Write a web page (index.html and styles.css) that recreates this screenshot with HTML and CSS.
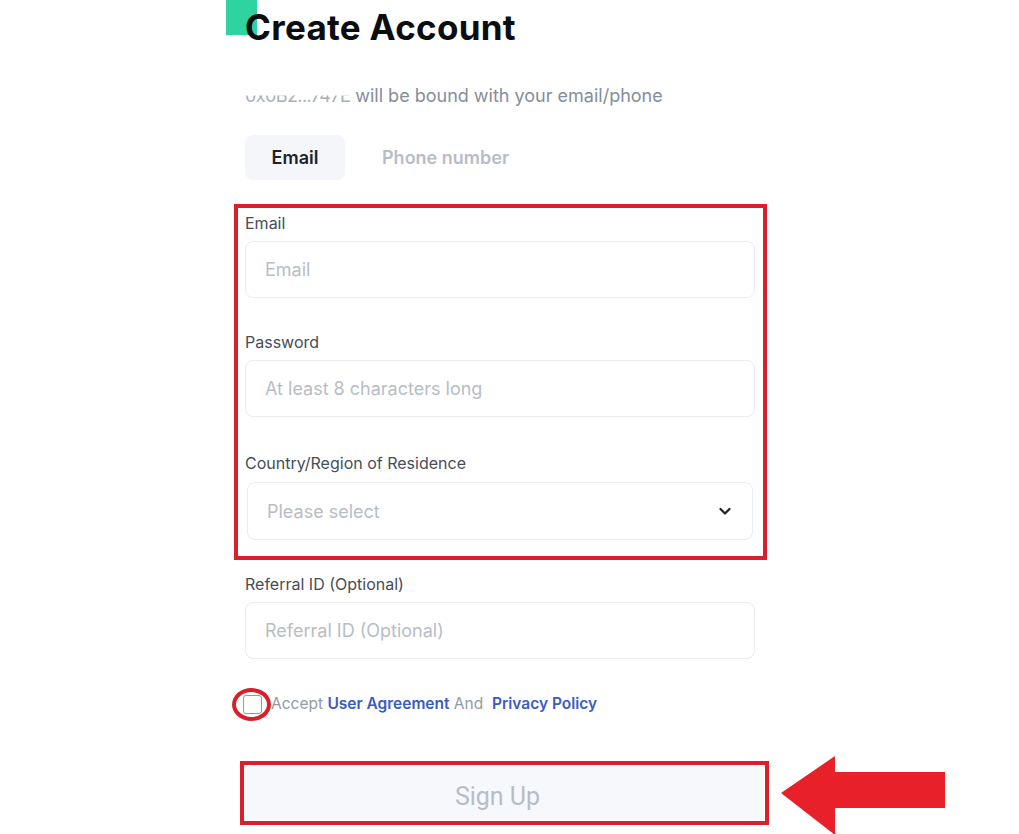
FILE: index.html
```html
<!DOCTYPE html>
<html lang="en">
<head>
    <meta charset="UTF-8">
    <meta name="viewport" content="width=device-width, initial-scale=1.0">
    <title>Create Account</title>
    <link rel="stylesheet" href="styles.css">
</head>
<body>
    <div class="page">
        <div class="logo-block"></div>
        <h1 class="title">Create Account</h1>
        <p class="subtitle"><span class="address">0x0B2...747E</span> will be bound with your email/phone</p>

        <div class="tabs">
            <div class="tab active">Email</div>
            <div class="tab">Phone number</div>
        </div>

        <!-- campos marcados en rojo -->
        <div class="highlight">
            <div class="field first">
                <label class="label">Email</label>
                <div class="input">Email</div>
            </div>
            <div class="field">
                <label class="label">Password</label>
                <div class="input">At least 8 characters long</div>
            </div>
            <div class="field country">
                <label class="label">Country/Region of Residence</label>
                <div class="input select">
                    <span>Please select</span>
                    <svg width="14" height="14" viewBox="0 0 14 14"><path d="M2.5 5 L7 9.5 L11.5 5" fill="none" stroke="#1e2329" stroke-width="2.2" stroke-linecap="round" stroke-linejoin="round"/></svg>
                </div>
            </div>
        </div>

        <div class="field referral">
            <label class="label">Referral ID (Optional)</label>
            <div class="input">Referral ID (Optional)</div>
        </div>

        <div class="agree">
            <span class="checkbox"></span>
            <span class="ring"></span>
            <span>Accept <a href="#">User Agreement</a> And &nbsp;<a href="#">Privacy Policy</a></span>
        </div>

        <div class="signup-box">
            <button class="signup">Sign Up</button>
        </div>

        <svg class="arrow" width="166" height="80" viewBox="0 0 166 80">
            <path d="M0 37 L54 0 L54 16 L164 16 L164 52 L54 52 L54 79 Z" fill="#e8202a"/>
        </svg>
    </div>
</body>
</html>
```

FILE: styles.css
```css
body {
    margin: 0;
    background: #ffffff;
    font-family: Inter, "Noto Sans", sans-serif;
    color: #1e2329;
}
.page {
    position: relative;
    width: 510px;
    margin-left: 245px;
    height: 834px;
}
.logo-block {
    position: absolute;
    left: -19px;
    top: 0;
    width: 31px;
    height: 35px;
    background: #2ed3a0;
}
.title {
    position: relative;
    margin: 0;
    padding-top: 6px;
    font-size: 35px;
    line-height: 42px;
    font-weight: 700;
    color: #0b0e11;
    letter-spacing: 0.3px;
}
.subtitle {
    margin: 37px 0 0;
    font-size: 18px;
    line-height: 22px;
    color: #848e9c;
}
.address {
    display: inline-block;
    color: #aab0b9;
    letter-spacing: -0.6px;
    clip-path: inset(48% 0 0 0);
}
.tabs {
    display: flex;
    gap: 2px;
    margin-top: 28px;
    height: 45px;
}
.tab {
    width: 100px;
    display: flex;
    align-items: center;
    justify-content: center;
    font-size: 18px;
    font-weight: 600;
    color: #b7bdc6;
    border-radius: 8px;
}
.tab + .tab {
    width: auto;
    padding-left: 35px;
}
.tab.active {
    background: #f5f6fa;
    color: #1e2329;
}
.highlight {
    margin: 24px -12px 0 -11px;
    padding: 3px 8px 16px 7px;
    border: 4px solid #d8202a;
}
.field {
    margin-top: 32px;
}
.field.first {
    margin-top: 0;
}
.field.country {
    margin-top: 34px;
}
.country .label {
    margin-bottom: 7px;
}
.label {
    display: block;
    font-size: 16px;
    line-height: 24px;
    color: #474d57;
    margin-bottom: 6px;
}
.input {
    box-sizing: border-box;
    height: 57px;
    border: 1px solid #eaecef;
    border-radius: 8px;
    padding: 0 19px;
    display: flex;
    align-items: center;
    font-size: 18px;
    color: #b7bdc6;
}
.select {
    height: 58px;
    margin: 0 2px;
    justify-content: space-between;
    padding-right: 20px;
}
.referral {
    margin-top: 12px;
}
.agree {
    position: relative;
    display: flex;
    align-items: center;
    margin: 35px 0 0 -2px;
    font-size: 15.5px;
    line-height: 20px;
    color: #929aa5;
}
.checkbox {
    box-sizing: border-box;
    width: 19px;
    height: 19px;
    border: 1px solid #929aa5;
    border-radius: 3px;
    margin-right: 9px;
}
.ring {
    position: absolute;
    left: -11px;
    top: 50%;
    margin-top: -16px;
    width: 31px;
    height: 25px;
    border: 4px solid #d8202a;
    border-radius: 50%;
}
.agree a {
    color: #3b5bc4;
    font-weight: 600;
    text-decoration: none;
}
.signup-box {
    margin: 47px 0 0 -5px;
    width: 519px;
    border: 4px solid #d8202a;
    padding: 1px;
}
.signup {
    display: block;
    width: 100%;
    height: 54px;
    border: none;
    border-radius: 2px;
    background: #f7f8fc;
    font-family: Roboto, sans-serif;
    font-size: 25px;
    color: #b7bdc6;
    cursor: pointer;
    padding: 6px 14px 0 0;
}
.arrow {
    position: absolute;
    left: 536px;
    top: 756px;
}
```
